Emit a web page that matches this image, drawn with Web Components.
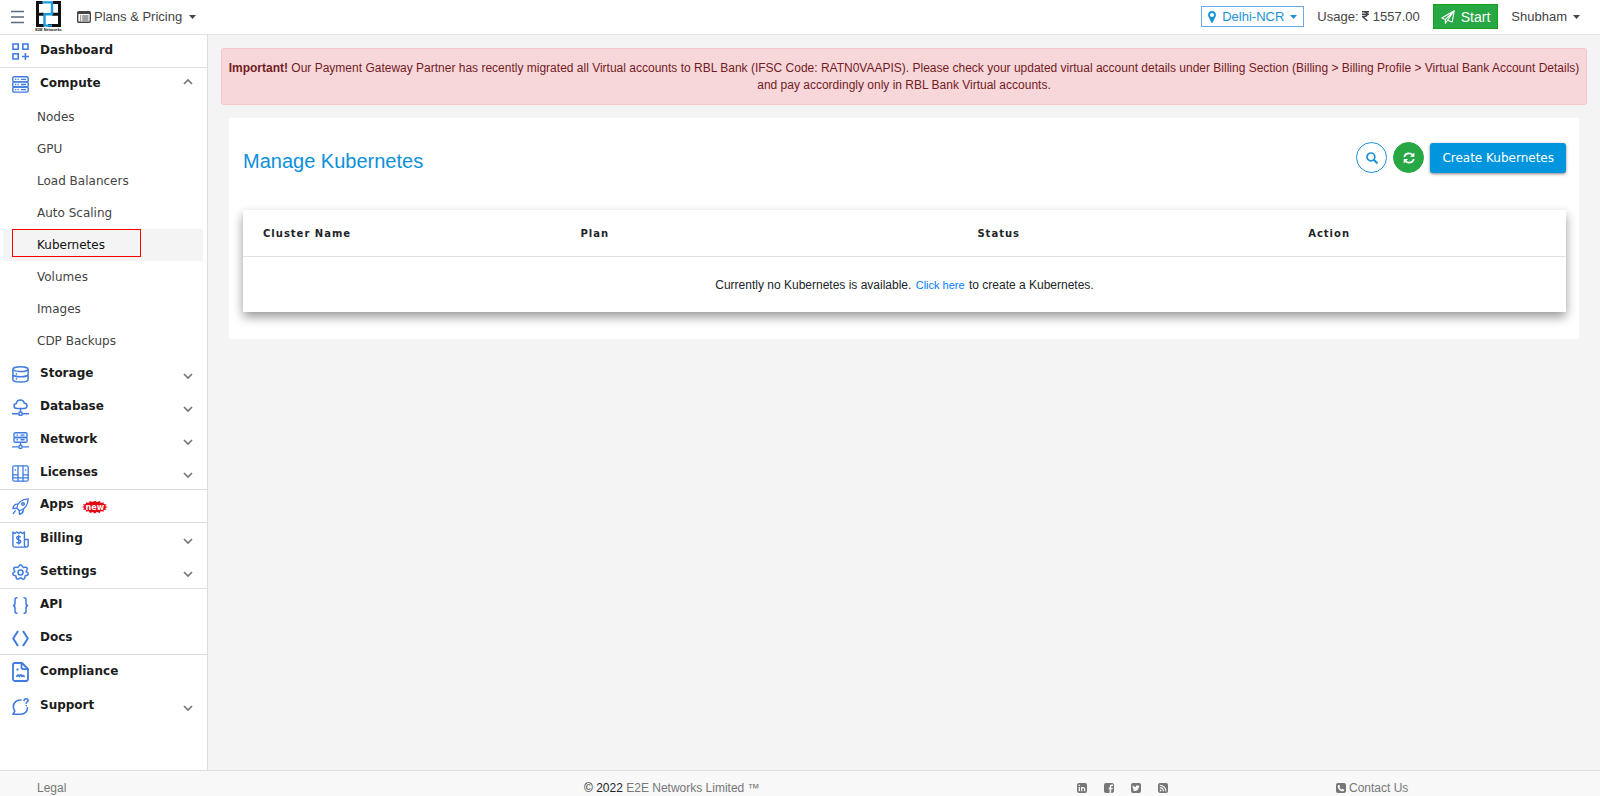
<!DOCTYPE html>
<html lang="en">
<head>
<meta charset="utf-8">
<meta name="viewport" content="width=device-width, initial-scale=1">
<title>Manage Kubernetes</title>
<style>
    body {
        margin: 0;
        font-family: "Liberation Sans", Arial, sans-serif;
        font-size: 12px;
        color: #212529;
        background: #f4f4f4;
    }
</style>
</head>
<body>
<app-shell>
    <app-header slot="header"></app-header>

    <side-nav slot="nav">
        <nav-section>
            <nav-item icon="dashboard">Dashboard</nav-item>
        </nav-section>
        <nav-section>
            <nav-item icon="compute" chevron="up">Compute</nav-item>
            <nav-submenu>
                <nav-subitem>Nodes</nav-subitem>
                <nav-subitem>GPU</nav-subitem>
                <nav-subitem>Load Balancers</nav-subitem>
                <nav-subitem>Auto Scaling</nav-subitem>
                <nav-subitem active>Kubernetes</nav-subitem>
                <nav-subitem>Volumes</nav-subitem>
                <nav-subitem>Images</nav-subitem>
                <nav-subitem>CDP Backups</nav-subitem>
            </nav-submenu>
            <nav-item icon="storage" chevron="down">Storage</nav-item>
            <nav-item icon="database" chevron="down">Database</nav-item>
            <nav-item icon="network" chevron="down">Network</nav-item>
            <nav-item icon="licenses" chevron="down">Licenses</nav-item>
        </nav-section>
        <nav-section>
            <nav-item icon="apps">Apps <new-badge slot="badge">new</new-badge></nav-item>
        </nav-section>
        <nav-section>
            <nav-item icon="billing" chevron="down">Billing</nav-item>
            <nav-item icon="settings" chevron="down">Settings</nav-item>
        </nav-section>
        <nav-section>
            <nav-item icon="api">API</nav-item>
            <nav-item icon="docs">Docs</nav-item>
        </nav-section>
        <nav-section loose>
            <nav-item icon="compliance">Compliance</nav-item>
            <nav-item icon="support" chevron="down">Support</nav-item>
        </nav-section>
    </side-nav>

    <alert-banner>
        <strong>Important!</strong> Our Payment Gateway Partner has recently migrated all Virtual accounts to RBL Bank (IFSC Code: RATN0VAAPIS). Please check your updated virtual account details under Billing Section (Billing &gt; Billing Profile &gt; Virtual Bank Account Details) and pay accordingly only in RBL Bank Virtual accounts.
    </alert-banner>
    <kubernetes-panel></kubernetes-panel>

    <app-footer slot="footer"></app-footer>
</app-shell>

<script>
// every icon is [viewBox, markup]; strokes and fills use currentColor
const ICONS = {
    dashboard: ['0 0 17 17', `<g fill="none" stroke="currentColor" stroke-width="1.600"><path d="M1 1h5.200v5.200H1zM10.800 1H16v5.200h-5.200zM1 10.800h5.200V16H1zM13.400 10v7M10 13.500h7"/></g>`],
    compute: ['0 0 17 17', `<g fill="none" stroke="currentColor" stroke-width="1.400"><rect x=".8" y=".8" width="15.400" height="5.100" rx="1.300"/><rect x=".8" y="5.900" width="15.400" height="5.100" rx="1.300"/><rect x=".8" y="11" width="15.400" height="5.100" rx="1.300"/><path d="M3 3.400h1.300M5.400 3.400h1.300M9 3.400h5M3 8.500h1.300M5.400 8.500h1.300M9 8.500h5M3 13.600h1.300M5.400 13.600h1.300M9 13.600h5"/></g>`],
    storage: ['0 0 17 17', `<g fill="none" stroke="currentColor" stroke-width="1.500"><ellipse cx="8.500" cy="3.200" rx="7.600" ry="2.400"/><path d="M.9 3.200v10.400c0 1.400 3.400 2.500 7.600 2.500s7.600-1.100 7.600-2.500V3.200M.9 8.400c0 1.300 3.400 2.400 7.600 2.400s7.600-1.100 7.600-2.400M3.700 8h1.400M3.700 13h1.400"/></g>`],
    database: ['0 0 17 17', `<g fill="none" stroke="currentColor" stroke-width="1.500"><path d="M5 9.400C3 9.400 2 8.300 2 6.900c0-1.300 1-2.300 2.300-2.400C4.600 2.300 6.200.9 8.300.9c2.200 0 3.700 1.400 4 3.400 1.600 0 2.700 1.100 2.700 2.500s-1.100 2.600-2.900 2.600zM8.500 9.400v3.700M0 14.800h6.700M10.300 14.800H17"/><circle cx="8.500" cy="14.800" r="1.700"/></g>`],
    network: ['0 0 17 17', `<g fill="none" stroke="currentColor" stroke-width="1.400"><rect x="2" y=".8" width="13" height="4.700" rx="1.200"/><rect x="2" y="5.500" width="13" height="4.700" rx="1.200"/><path d="M4.500 3.100H6M8.500 3.100h4M4.500 7.800H6M8.500 7.800h4M8.500 10.200v3M0 14.900h6.700M10.300 14.900H17"/><circle cx="8.500" cy="14.900" r="1.600"/></g>`],
    licenses: ['0 0 17 17', `<g fill="none" stroke="currentColor" stroke-width="1.300"><rect x=".8" y=".8" width="15.400" height="15.400" rx="1.500"/><path d="M6 .8v15.400M11 .8v15.400M.8 9.800H6M11 9.800h5.200M.8 12.800h15.400M3.400 4.300v1.500M13.600 4.300v1.500"/></g>`],
    apps: ['0 0 17 17', `<g fill="none" stroke="currentColor" stroke-width="1.400" stroke-linejoin="round"><path d="M4.800 10.200C5.500 5 9.600 1.200 16.200.9 16 7.200 12.200 11.500 7.300 12.600z"/><circle cx="11" cy="6" r="1.300"/><path d="M5.900 6.300C3.200 5.700 1.500 7.200.9 10.600l3.900-.4M11.100 11.100c.6 2.600-.6 4.300-3.600 5.100l-.2-3.600M3.600 12.300 1 15.900"/></g>`],
    billing: ['0 0 17 17', `<g fill="none" stroke="currentColor" stroke-width="1.400" stroke-linejoin="round"><path d="M.9 1l1.900 1.400L4.700 1l2 1.400L8.600 1l1.900 1.400L12.400 1v12.800c0 1.400.7 2.300 1.900 2.300H3c-1.300 0-2.100-.9-2.100-2.200zM12.400 8.500h3.800v5.600c0 1.200-.8 2-1.900 2"/><path d="M8.700 6.300C8.300 5.600 7.700 5.400 6.700 5.400 5.500 5.400 4.700 6 4.700 7s.8 1.400 2 1.700 2.100.7 2.100 1.800-.9 1.700-2.100 1.700c-1.100 0-1.800-.4-2.200-1.100M6.700 4v9.600"/></g>`],
    settings: ['0 0 17 17', `<g fill="none" stroke="currentColor" stroke-width="1.500" stroke-linejoin="round"><circle cx="8.500" cy="8.500" r="2.500"/><path d="M8.500.8c1.600 0 1.600 2.100 2.800 2.600 1.200.4 2.600-1 3.700.4 1.200 1.700-.8 2.400-.8 3.600 0 .8 2 1 2 2.500-.1 2-2.200 1.100-3 2-.8.800.4 2.500-1.400 3.200-1.700.6-1.900-1.400-3.300-1.400s-1.600 2-3.300 1.400c-1.800-.7-.6-2.400-1.400-3.200-.8-.9-2.900 0-3-2 0-1.500 2-1.700 2-2.500 0-1.200-2-1.900-.8-3.600 1.100-1.400 2.500 0 3.700-.4C6.900 2.900 6.900.8 8.500.8z"/></g>`],
    api: ['0 0 17 17', `<g fill="none" stroke="currentColor" stroke-width="1.500"><path d="M5.500.8H4.800C3.500.8 3 1.500 3 2.700v3.500c0 1.500-.6 2.300-2.200 2.300C2.400 8.500 3 9.300 3 10.800v3.500c0 1.200.5 1.900 1.800 1.900h.7M11.500.8h.7c1.300 0 1.800.7 1.800 1.900v3.500c0 1.500.6 2.300 2.200 2.300-1.600 0-2.200.8-2.200 2.300v3.500c0 1.200-.5 1.900-1.800 1.900h-.7"/></g>`],
    docs: ['0 0 17 17', `<g fill="none" stroke="currentColor" stroke-width="2" stroke-linejoin="round"><path d="M6 1 1.200 8.500 6 16M11 1l4.800 7.500L11 16"/></g>`],
    compliance: ['0 0 17 20', `<g fill="none" stroke="currentColor" stroke-width="1.800" stroke-linejoin="round"><path d="M3 1h7l6 6v9.800c0 1.400-.8 2.200-2.100 2.200H3.100C1.800 19 1 18.200 1 16.800V3.200C1 1.800 1.800 1 3 1zM9.500 1v4.200c0 1.300.6 1.900 1.900 1.900H16"/><path d="M4.500 7.500h2M4.500 15c1-2.400 2-2.400 2.800-.6.900-1.900 2-1.900 2.600 0 .7-1.200 1.600-.9 2.600.6"/></g>`],
    support: ['0 0 17 17', `<g fill="none" stroke="currentColor" stroke-width="1.600" stroke-linecap="round" stroke-linejoin="round"><path d="M9 2C4.800 1.600 1.300 4.600 1.300 8.800c0 1.700.6 3.100 1.500 4.300L1 16.200h7.600c4.200 0 6.900-2.900 6.800-6.400"/><path d="M12 2.500c.2-1.100 1-1.700 2.100-1.700s2 .7 2 1.700c0 1.500-1.900 1.400-1.900 2.800M14.200 7.500v.1"/></g>`],
    up: ['0 0 10 10', `<path d="m1 7 4-4 4 4" fill="none" stroke="#777" stroke-width="1.700"/>`],
    down: ['0 0 10 10', `<path d="m1 3 4 4 4-4" fill="none" stroke="#777" stroke-width="1.700"/>`],
    menu: ['0 0 14 14', `<path d="M1 1.500h13M1 7h13M1 12.500h13" stroke="currentColor" stroke-width="1.400"/>`],
    plans: ['0 0 14 12', `<rect x=".7" y=".7" width="12.600" height="10.600" rx="1.200" fill="none" stroke="currentColor" stroke-width="1.400"/><path d="M1 2h12" stroke="currentColor" stroke-width="2"/><path d="M3 5h1.200M5.200 5H11.500M3 7h1.200M5.200 7h6.300M3 9h1.200M5.200 9h6.300" stroke="currentColor" stroke-width="1.100"/>`],
    caret: ['0 0 7 4', `<path d="M0 0h7L3.500 4z" fill="currentColor"/>`],
    pin: ['0 0 8 12', `<path fill="currentColor" fill-rule="evenodd" d="M4 0a3.900 3.900 0 0 0-3.900 3.900c0 .9.200 1.500.5 2.100l2.700 5.600c.3.500 1.100.5 1.400 0L7.400 6c.3-.6.500-1.200.5-2.100A3.900 3.900 0 0 0 4 0zm0 2a2 2 0 1 1 0 4 2 2 0 0 1 0-4z"/>`],
    rupee: ['0 0 7 10', `<path d="M0 .8h7M0 3.200h7M.2 .8H2c2.400 0 3.200.8 3.200 2.200C5.200 4.800 4 5.500 2 5.500H.6L5.400 10" fill="none" stroke="currentColor" stroke-width="1.400"/>`],
    plane: ['0 0 14 14', `<path d="M13.200.8.8 7.900l3.600 1.600zM13.200.8 11.200 12 6.500 10.200zM4.400 9.500v3.700l2.100-3" fill="none" stroke="currentColor" stroke-width="1.100" stroke-linejoin="round"/>`],
    search: ['0 0 12 12', `<circle cx="4.900" cy="4.900" r="3.900" fill="none" stroke="currentColor" stroke-width="1.700"/><path d="m7.800 7.800 3.600 3.600" stroke="currentColor" stroke-width="2"/>`],
    refresh: ['0 0 12 12', `<path d="M1.200 5C1.800 2.700 3.700 1.400 6 1.400c1.500 0 2.700.6 3.600 1.500M10.800 7c-.6 2.300-2.500 3.600-4.800 3.600-1.500 0-2.700-.6-3.600-1.500" fill="none" stroke="currentColor" stroke-width="1.800"/><path d="M11.300.6v4.300H7zM.7 11.400V7.100H5z" fill="currentColor"/>`],
    linkedin: ['0 0 10 10', `<rect width="10" height="10" rx="2" fill="currentColor"/><path d="M2.300 4v4.200M2.300 1.800V3M4.700 8.200V4M4.700 6c0-1.800 2.900-1.800 2.900 0v2.200" fill="none" stroke="#f8f8f8" stroke-width="1.300"/>`],
    facebook: ['0 0 10 10', `<rect width="10" height="10" rx="2" fill="currentColor"/><path d="M6.400 10V3.700c0-1 .5-1.500 1.400-1.500H9M4.700 5.600h4" fill="none" stroke="#f8f8f8" stroke-width="1.500"/>`],
    twitter: ['0 0 10 10', `<rect width="10" height="10" rx="2" fill="currentColor"/><path fill="#f8f8f8" d="M8.600 3a3 3 0 0 1-.7.700C7.900 6.300 6.100 8.100 3.700 8.100c-.9 0-1.600-.2-2.300-.6.800 0 1.400-.2 2-.6-.6 0-1.100-.4-1.300-1h.6c-.7-.2-1.100-.8-1.100-1.500l.6.200c-.7-.5-.8-1.300-.4-2 .8.900 1.800 1.400 3.100 1.500-.2-1.100.5-1.900 1.500-1.900.4 0 .8.200 1.100.5l.9-.4-.6.800z"/>`],
    rss: ['0 0 10 10', `<rect width="10" height="10" rx="2" fill="currentColor"/><path d="M1.700 4.600c2.200 0 3.700 1.500 3.700 3.700M1.700 2.200c3.500 0 6.100 2.600 6.100 6.100" fill="none" stroke="#f8f8f8" stroke-width="1.100"/><circle cx="2.600" cy="7.400" r=".9" fill="#f8f8f8"/>`],
    phone: ['0 0 10 10', `<rect width="10" height="10" rx="2" fill="currentColor"/><path fill="#f8f8f8" d="M3.300 1.700c-.9.200-1.600.8-1.600 1.700 0 2.300 2.600 4.900 4.900 4.900.9 0 1.500-.7 1.700-1.600L6.600 5.800l-.8.8C4.800 6.100 3.900 5.200 3.400 4.200l.8-.8z"/>`],
    logo: ['0 0 25 26', `<path fill="#fff" d="M0 0h25v26H0z"/><g fill="none" stroke="#111" stroke-width="3"><path d="M7 1.500H1.500v23H8M17 1.500h6.500v23H12M1.500 13.200H8M16 13.200h7.500"/></g><g fill="none" stroke="#1a9be0" stroke-width="2.400"><path d="M6 1.400h10v11.800H8.500v11.400H16"/></g>`]
};

class UiIcon extends HTMLElement {
    constructor() {
        super();
        this.attachShadow({ mode: 'open' });
    }

    connectedCallback() {
        const [box, markup] = ICONS[this.getAttribute('name')];
        const [, , w, h] = box.split(' ');
        this.shadowRoot.innerHTML = `
            <style>
                :host { display: inline-flex; flex: none; }
                svg { display: block; }
            </style>
            <svg viewBox="${box}" width="${w}" height="${h}" aria-hidden="true">${markup}</svg>
        `;
    }
}
customElements.define('ui-icon', UiIcon);

// helper for elements whose shadow root is plain markup
function define(name, html) {
    const template = document.createElement('template');
    template.innerHTML = html;

    customElements.define(name, class extends HTMLElement {
        constructor() {
            super();
            this.attachShadow({ mode: 'open' });
            this.shadowRoot.appendChild(template.content.cloneNode(true));
        }
    });
}

define('app-shell', `
    <style>
        :host {
            display: grid;
            grid-template: auto 1fr auto / 208px minmax(0, 1fr);
            min-height: 100vh;
        }
        .header, .footer { grid-column: 1 / -1; }
        main { padding: 13px; }
    </style>
    <div class="header"><slot name="header"></slot></div>
    <slot name="nav"></slot>
    <main><slot></slot></main>
    <div class="footer"><slot name="footer"></slot></div>
`);

define('app-header', `
    <style>
        :host {
            display: flex;
            align-items: center;
            box-sizing: border-box;
            height: 35px;
            padding: 0 20px 1px 10px;
            border-bottom: 1px solid #dee2e6;
            background: #fff;
            font-size: 13px;
            color: #444;
        }
        button {
            display: inline-flex;
            align-items: center;
            gap: 6px;
            padding: 0;
            border: 0;
            background: none;
            font: inherit;
            color: inherit;
        }
        .menu { color: #5a6b7b; }
        .logo {
            display: flex;
            flex-direction: column;
            align-items: center;
            width: 25px;
            margin: 0 16px 0 12px;
            font-size: 4px;
            font-weight: bold;
            line-height: 5px;
            white-space: nowrap;
            color: #111;
            text-decoration: none;
        }
        .plans { gap: 3px; }
        .plans ui-icon:last-child { margin-left: 4px; }
        .right {
            display: flex;
            align-items: center;
            gap: 13px;
            margin-left: auto;
        }
        .region {
            height: 21px;
            padding: 0 6px;
            border: 1px solid #6aa8e8;
            color: #1a93d9;
        }
        .start {
            height: 25px;
            padding: 0 7px;
            border: 1px solid #14a01c;
            background: #28a745;
            font-size: 14px;
            color: #fff;
        }
    </style>
    <button class="menu" aria-label="Toggle menu"><ui-icon name="menu"></ui-icon></button>
    <a class="logo" href="#"><ui-icon name="logo"></ui-icon>E2E Networks</a>
    <button class="plans"><ui-icon name="plans"></ui-icon>Plans &amp; Pricing<ui-icon name="caret"></ui-icon></button>
    <div class="right">
        <button class="region"><ui-icon name="pin"></ui-icon>Delhi-NCR<ui-icon name="caret"></ui-icon></button>
        <span>Usage: <ui-icon name="rupee"></ui-icon> 1557.00</span>
        <button class="start"><ui-icon name="plane"></ui-icon>Start</button>
        <button>Shubham<ui-icon name="caret"></ui-icon></button>
    </div>
`);

define('side-nav', `
    <style>
        :host {
            display: block;
            border-right: 1px solid #dedede;
            background: #fff;
            font-family: "DejaVu Sans", Verdana, sans-serif;
        }
    </style>
    <nav><slot></slot></nav>
`);

define('nav-section', `
    <style>
        :host {
            display: flex;
            flex-direction: column;
            gap: 1px;
            border-bottom: 1px solid #dedede;
        }
        :host([loose]) {
            gap: 2px;
            padding-top: 1px;
            border-bottom: 0;
        }
    </style>
    <slot></slot>
`);

class NavItem extends HTMLElement {
    constructor() {
        super();
        this.attachShadow({ mode: 'open' });
    }

    connectedCallback() {
        const chevron = this.getAttribute('chevron');
        this.shadowRoot.innerHTML = `
            <style>
                :host { display: block; }
                a {
                    display: flex;
                    align-items: center;
                    height: 32px;
                    padding: 0 14px 0 12px;
                    font-weight: bold;
                    color: #1c1c1c;
                    text-decoration: none;
                }
                .icon { color: #3f7be0; }
                .label {
                    flex: 1;
                    padding: 0 0 2px 11px;
                }
                .down { padding-top: 4px; }
                .up { padding-bottom: 5px; }
            </style>
            <a href="#">
                <ui-icon class="icon" name="${this.getAttribute('icon')}"></ui-icon>
                <span class="label"><slot></slot><slot name="badge"></slot></span>
                ${chevron ? `<ui-icon class="${chevron}" name="${chevron}"></ui-icon>` : ''}
            </a>
        `;
    }
}
customElements.define('nav-item', NavItem);

define('nav-submenu', `
    <style>
        :host { display: block; }
    </style>
    <slot></slot>
`);

define('nav-subitem', `
    <style>
        :host {
            display: block;
            position: relative;
            margin: 0 4px 0 3px;
        }
        a {
            display: block;
            padding-left: 34px;
            line-height: 32px;
            color: #444;
            text-decoration: none;
        }
        :host([active]) { background: #f4f4f4; }
        :host([active]) a { color: #111; }
        /* frame round the current page */
        :host([active])::before {
            content: "";
            position: absolute;
            inset: 0 62px 4px 9px;
            border: 1px solid #f00;
        }
    </style>
    <a href="#"><slot></slot></a>
`);

// badge outline: points alternate between the outer and the inner ellipse
const burst = [];
for (let i = 0; i < 32; i++) {
    const r = i % 2 ? 40 : 50;
    const a = i * Math.PI / 16;
    burst.push(`${(50 + r * Math.cos(a)).toFixed(1)}% ${(50 + r * Math.sin(a)).toFixed(1)}%`);
}

define('new-badge', `
    <style>
        :host {
            display: inline-block;
            width: 26px;
            margin-left: 4px;
            background: #e30613;
            clip-path: polygon(${burst.join(',')});
            font-size: 8px;
            line-height: 13px;
            text-align: center;
            vertical-align: -2px;
            color: #fff;
        }
    </style>
    <slot></slot>
`);

define('alert-banner', `
    <style>
        :host {
            display: block;
            padding: 11px 4px 10px;
            border: 1px solid #f5c6cb;
            border-radius: 3px;
            background: #f8d7da;
            line-height: 17px;
            text-align: center;
            color: #721c24;
        }
    </style>
    <slot></slot>
`);

define('kubernetes-panel', `
    <style>
        :host {
            display: block;
            margin: 13px 8px;
            padding: 24px 13px 27px 14px;
            background: #fff;
        }
        header {
            display: flex;
            align-items: center;
            gap: 6px;
            margin-bottom: 37px;
        }
        h1 {
            flex: 1;
            margin: 0;
            padding-top: 7px;
            font-size: 20px;
            font-weight: normal;
            line-height: 24px;
            color: #0c90da;
        }
        button {
            display: flex;
            align-items: center;
            justify-content: center;
            height: 30px;
            padding: 0 12px;
            border: 0;
            border-radius: 3px;
            background: #0095dd;
            box-shadow: 0 1px 3px rgba(0, 0, 0, .5);
            font: 12px "DejaVu Sans", Verdana, sans-serif;
            color: #fff;
        }
        .round {
            width: 31px;
            height: 31px;
            padding: 0;
            border: 1px solid #28a745;
            border-radius: 50%;
            background: #28a745;
            box-shadow: none;
        }
        .search {
            border-color: #1a93d9;
            background: #fff;
            color: #1a93d9;
        }
        table {
            width: 100%;
            border-collapse: collapse;
            background: #fff;
            box-shadow: 0 5px 10px rgba(0, 0, 0, .4);
        }
        th {
            height: 46px;
            padding: 0 0 0 20px;
            border-bottom: 1px solid #dee2e6;
            font: bold 10px "DejaVu Sans", Verdana, sans-serif;
            letter-spacing: 1px;
            text-align: left;
        }
        td {
            height: 55px;
            padding: 0;
            text-align: center;
        }
        td a {
            margin: 0 1px;
            font-size: 11px;
            color: #007bff;
            text-decoration: none;
        }
    </style>
    <header>
        <h1>Manage Kubernetes</h1>
        <button class="round search" aria-label="Search"><ui-icon name="search"></ui-icon></button>
        <button class="round" aria-label="Refresh"><ui-icon name="refresh"></ui-icon></button>
        <button>Create Kubernetes</button>
    </header>
    <table>
        <colgroup><col style="width: 24%"><col style="width: 30%"><col style="width: 25%"><col></colgroup>
        <thead>
            <tr><th>Cluster Name</th><th>Plan</th><th>Status</th><th>Action</th></tr>
        </thead>
        <tbody>
            <tr><td colspan="4">Currently no Kubernetes is available. <a href="#">Click here</a> to create a Kubernetes.</td></tr>
        </tbody>
    </table>
`);

define('app-footer', `
    <style>
        :host {
            display: grid;
            grid-template-columns: 547fr 493fr 259fr 264fr;
            padding: 9px 0 0 37px;
            border-top: 1px solid #dedede;
            background: #f8f8f8;
            line-height: 16px;
            color: #777;
        }
        a {
            color: inherit;
            text-decoration: none;
        }
        .social, .social a, .contact {
            display: flex;
            align-items: center;
        }
        .social { gap: 17px; }
        .contact { gap: 3px; }
        .year { color: #212529; }
    </style>
    <a href="#">Legal</a>
    <span><span class="year">© 2022</span> E2E Networks Limited ™</span>
    <div class="social">
        <a href="#" aria-label="LinkedIn"><ui-icon name="linkedin"></ui-icon></a>
        <a href="#" aria-label="Facebook"><ui-icon name="facebook"></ui-icon></a>
        <a href="#" aria-label="Twitter"><ui-icon name="twitter"></ui-icon></a>
        <a href="#" aria-label="RSS"><ui-icon name="rss"></ui-icon></a>
    </div>
    <a class="contact" href="#"><ui-icon name="phone"></ui-icon>Contact Us</a>
`);
</script>
</body>
</html>
